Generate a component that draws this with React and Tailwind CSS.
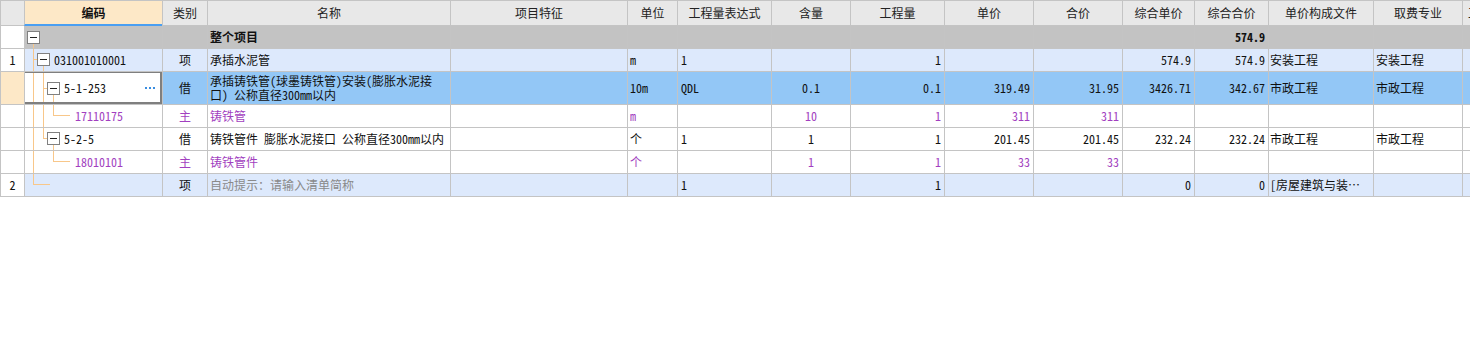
import React from "react";

const L = "#f8c78a";

function V({ x, y1, y2 }) {
  return <rect x={x} y={y1} width={1} height={y2 - y1} fill={L} />;
}
function H({ y, x1, x2 }) {
  return <rect x={x1} y={y} width={x2 - x1} height={1} fill={L} />;
}
function Box({ x, y }) {
  return (
    <g>
      <rect x={x + 0.5} y={y + 0.5} width={12} height={12} fill="#ffffff" stroke="#808080" />
      <rect x={x + 3} y={y + 6} width={7} height={1} fill="#222222" />
    </g>
  );
}

function Tree({ children }) {
  return (
    <svg className="absolute left-0 top-0 w-full h-full pointer-events-none" xmlns="http://www.w3.org/2000/svg">
      {children}
    </svg>
  );
}

const base =
  "relative flex items-center shrink-0 border-l border-b border-[#c4c4c4] overflow-hidden whitespace-nowrap";

const W = [
  "w-[24px] justify-center",
  "w-[138px]",
  "w-[45px] justify-center",
  "w-[243px] pl-[2px]",
  "w-[177px] pl-[2px]",
  "w-[50px] pl-[2px]",
  "w-[94px] pl-[3px]",
  "w-[79px] justify-center",
  "w-[94px] justify-end pr-[3px]",
  "w-[89px] justify-end pr-[3px]",
  "w-[89px] justify-end pr-[3px]",
  "w-[72px] justify-end pr-[3px]",
  "w-[74px] justify-end pr-[3px]",
  "w-[105px] pl-[1px]",
  "w-[89px] pl-[2px]",
  "w-[8px]",
];

const HW = [
  "w-[24px] justify-center",
  "w-[138px] justify-center",
  "w-[45px] justify-center",
  "w-[243px] justify-center",
  "w-[177px] justify-center",
  "w-[50px] justify-center",
  "w-[94px] justify-center",
  "w-[79px] justify-center",
  "w-[94px] justify-center",
  "w-[89px] justify-center",
  "w-[89px] justify-center",
  "w-[72px] justify-center",
  "w-[74px] justify-center",
  "w-[105px] justify-center",
  "w-[89px] justify-center",
  "w-[8px] pl-[5px]",
];

const headers = [
  "",
  "编码",
  "类别",
  "名称",
  "项目特征",
  "单位",
  "工程量表达式",
  "含量",
  "工程量",
  "单价",
  "合价",
  "综合单价",
  "综合合价",
  "单价构成文件",
  "取费专业",
  "工",
];

function Header() {
  return (
    <div className="flex h-[26px]">
      {headers.map((h, i) => {
        if (i === 1) {
          return (
            <div
              key={i}
              className="relative flex items-center justify-center shrink-0 w-[138px] border-l border-t border-[#c4c4c4] border-b-2 border-b-[#4a9ff2] bg-[#fde8c7] font-bold text-[#111]"
            >
              {h}
            </div>
          );
        }
        return (
          <div
            key={i}
            className={
              "relative flex items-center shrink-0 border-l border-t border-b border-[#c4c4c4] bg-[#e8e8e8] text-[#222] overflow-hidden whitespace-nowrap " +
              HW[i]
            }
          >
            {h}
          </div>
        );
      })}
    </div>
  );
}

function Row({ h, bg, numBg = "bg-white", num = "", tree, treeBg, cells, cellCls = {} }) {
  return (
    <div className={"flex " + h}>
      <div className={base + " " + W[0] + " " + numBg}>{num}</div>
      <div className={base + " " + W[1] + " " + (treeBg || bg)}>{tree}</div>
      {cells.map((c, j) => {
        const i = j + 2;
        return (
          <div key={i} className={base + " " + W[i] + " " + bg + " " + (cellCls[i] || "")}>
            {c}
          </div>
        );
      })}
    </div>
  );
}

const P = "text-[#a23fc0]";

export default function App() {
  return (
    <div className="w-[1470px] h-[337px] bg-white overflow-hidden font-['Noto_Sans_CJK_SC',sans-serif] text-[12px] leading-[14px] text-[#111] [font-feature-settings:'hwid']">
      <Header />

      {/* 整个项目 */}
      <Row
        h="h-[23px]"
        bg="bg-[#c3c3c3]"
        tree={
          <Tree>
            <V x={8} y1={18} y2={23} />
            <Box x={2} y={5} />
          </Tree>
        }
        cells={["", "整个项目", "", "", "", "", "", "", "", "", "574.9", "", "", ""]}
        cellCls={{ 3: "font-bold", 12: "font-bold" }}
      />

      {/* 1 */}
      <Row
        h="h-[23px]"
        bg="bg-[#dde9fc]"
        num="1"
        tree={
          <>
            <Tree>
              <V x={8} y1={0} y2={23} />
              <H y={10} x1={8} x2={12} />
              <V x={18} y1={17} y2={23} />
              <Box x={12} y={4} />
            </Tree>
            <span className="relative pl-[29px]">031001010001</span>
          </>
        }
        cells={["项", "承插水泥管", "", "m", "1", "", "1", "", "", "574.9", "574.9", "安装工程", "安装工程", ""]}
      />

      {/* selected 5-1-253 */}
      <Row
        h="h-[33px]"
        bg="bg-[#93c7f6]"
        numBg="bg-[#fde8c7]"
        treeBg="bg-white"
        tree={
          <>
            <Tree>
              <V x={8} y1={0} y2={33} />
              <V x={18} y1={0} y2={33} />
              <H y={16} x1={18} x2={22} />
              <V x={28} y1={23} y2={33} />
              <Box x={22} y={10} />
            </Tree>
            <span className="relative pl-[39px]">5-1-253</span>
            <span className="absolute left-[120px] top-[15px] flex gap-[2px]">
              <span className="w-[2px] h-[2px] bg-[#3a8de0]" />
              <span className="w-[2px] h-[2px] bg-[#3a8de0]" />
              <span className="w-[2px] h-[2px] bg-[#3a8de0]" />
            </span>
            <div className="absolute left-[-2px] top-[-1px] w-[139px] h-[33px] border-2 border-[#7f7f7f] border-l-[#3a8ee6] pointer-events-none" />
          </>
        }
        cells={[
          "借",
          <span className="flex flex-col leading-[14px]">
            <span>承插铸铁管(球墨铸铁管)安装(膨胀水泥接</span>
            <span>口) 公称直径300mm以内</span>
          </span>,
          "",
          "10m",
          "QDL",
          "0.1",
          "0.1",
          "319.49",
          "31.95",
          "3426.71",
          "342.67",
          "市政工程",
          "市政工程",
          "",
        ]}
      />

      {/* 17110175 */}
      <Row
        h="h-[23px]"
        bg="bg-white"
        tree={
          <>
            <Tree>
              <V x={8} y1={0} y2={23} />
              <V x={18} y1={0} y2={23} />
              <V x={28} y1={0} y2={10} />
              <H y={10} x1={28} x2={45} />
            </Tree>
            <span className={"relative pl-[50px] " + P}>17110175</span>
          </>
        }
        cells={["主", "铸铁管", "", "m", "", "10", "1", "311", "311", "", "", "", "", ""]}
        cellCls={{ 2: P, 3: P, 5: P, 7: P, 8: P, 9: P, 10: P }}
      />

      {/* 5-2-5 */}
      <Row
        h="h-[23px]"
        bg="bg-white"
        tree={
          <>
            <Tree>
              <V x={8} y1={0} y2={23} />
              <V x={18} y1={0} y2={10} />
              <H y={10} x1={18} x2={22} />
              <V x={28} y1={17} y2={23} />
              <Box x={22} y={4} />
            </Tree>
            <span className="relative pl-[39px]">5-2-5</span>
          </>
        }
        cells={[
          "借",
          "铸铁管件 膨胀水泥接口 公称直径300mm以内",
          "",
          "个",
          "1",
          "1",
          "1",
          "201.45",
          "201.45",
          "232.24",
          "232.24",
          "市政工程",
          "市政工程",
          "",
        ]}
      />

      {/* 18010101 */}
      <Row
        h="h-[23px]"
        bg="bg-white"
        tree={
          <>
            <Tree>
              <V x={8} y1={0} y2={23} />
              <V x={28} y1={0} y2={10} />
              <H y={10} x1={28} x2={45} />
            </Tree>
            <span className={"relative pl-[50px] " + P}>18010101</span>
          </>
        }
        cells={["主", "铸铁管件", "", "个", "", "1", "1", "33", "33", "", "", "", "", ""]}
        cellCls={{ 2: P, 3: P, 5: P, 7: P, 8: P, 9: P, 10: P }}
      />

      {/* 2 */}
      <Row
        h="h-[23px]"
        bg="bg-[#dde9fc]"
        num="2"
        tree={
          <Tree>
            <V x={8} y1={0} y2={10} />
            <H y={10} x1={8} x2={25} />
          </Tree>
        }
        cells={["项", "自动提示：请输入清单简称", "", "", "1", "", "1", "", "", "0", "0", "[房屋建筑与装…", "", ""]}
        cellCls={{ 3: "text-[#8a8a8a]" }}
      />
    </div>
  );
}
